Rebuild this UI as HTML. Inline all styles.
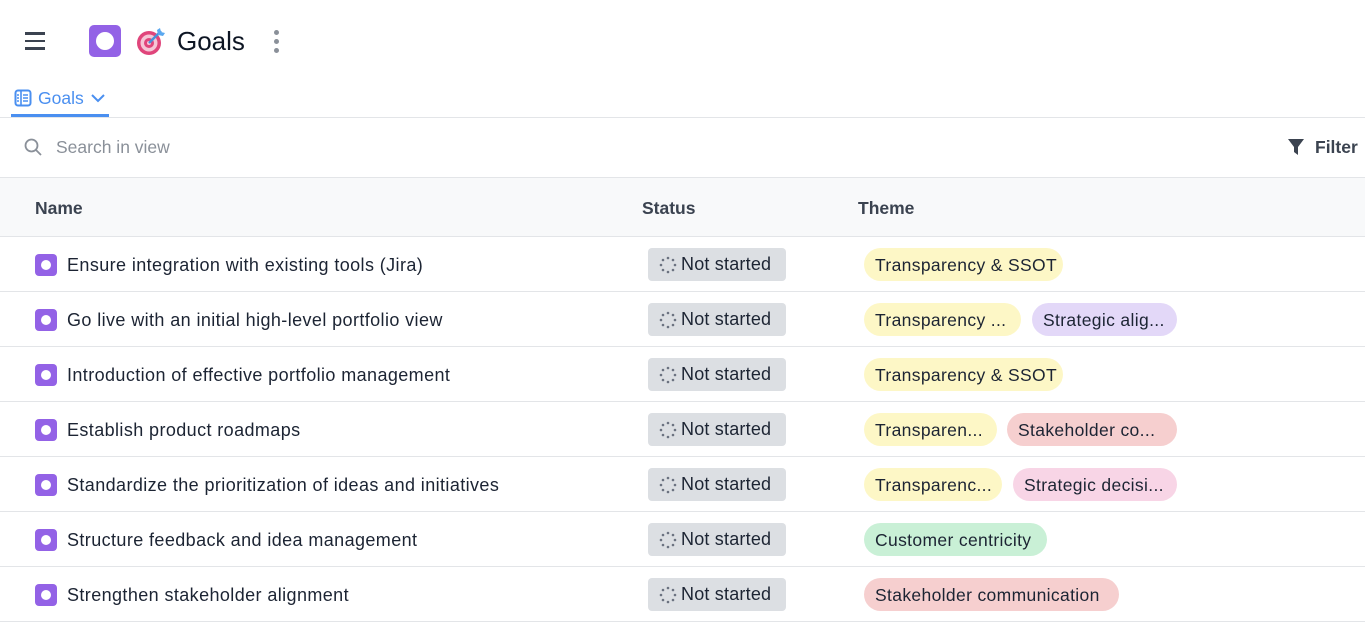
<!DOCTYPE html>
<html><head><style>
*{box-sizing:border-box;margin:0;padding:0}
body{width:1365px;height:617px;overflow:hidden;background:#fff;font-family:"Liberation Sans",sans-serif;color:#1c2433;position:relative}
.abs{position:absolute}
.row{position:absolute;left:0;width:1365px;height:55px;border-bottom:1px solid #e3e5e8}
.ic{position:absolute;left:35px;top:17px;width:22px;height:22px;background:#9362e6;border-radius:4px}
.ic:after{content:"";position:absolute;left:6px;top:6px;width:10px;height:10px;border-radius:50%;background:#fff}
.nm{position:absolute;left:67px;top:18px;font-size:18px;letter-spacing:0.4px;white-space:nowrap}
.st{position:absolute;left:648px;top:11px;width:138px;height:33px;background:#dcdfe3;border-radius:4px;font-size:18px;padding:6px 0 0 33px;letter-spacing:0.2px}
.st svg{position:absolute;left:11px;top:8px}
.tag{position:absolute;top:11px;height:33px;border-radius:17px;font-size:17.5px;padding:7px 0 0 11px;white-space:nowrap;overflow:hidden;letter-spacing:0.35px}
.y{background:#fdf7c6}.p{background:#e3d8f8}.r{background:#f6cfcf}.k{background:#f8d5e6}.g{background:#c9f0d6}
</style></head><body>
<div class="abs" style="left:25px;top:32px;width:20px;height:18px">
<div style="height:2.5px;background:#3b4350;margin-bottom:5px"></div><div style="height:2.5px;background:#3b4350;margin-bottom:5px"></div><div style="height:2.5px;background:#3b4350"></div></div>
<div class="abs" style="left:89px;top:25px;width:32px;height:32px;background:#9362e6;border-radius:5px"><div style="position:absolute;left:7px;top:7px;width:18px;height:18px;border-radius:50%;background:#fff"></div></div>
<svg class="abs" style="left:136px;top:27px" width="30" height="30" viewBox="0 0 30 30"><circle cx="13" cy="16" r="12" fill="#e0457b"/><circle cx="13" cy="16" r="8.5" fill="#f5c6d6"/><circle cx="13" cy="16" r="5" fill="#e0457b"/><circle cx="13" cy="16" r="2" fill="#f5c6d6"/><path d="M13 16 L25 4" stroke="#4a90d9" stroke-width="2.5"/><path d="M21 3 l3 -2 1 4 4 1 -2 3 -5 -1z" fill="#5aa8f0"/></svg>
<div class="abs" style="left:177px;top:26px;font-size:26px;color:#0e1624">Goals</div>
<div class="abs" style="left:274px;top:30px;width:6px">
<div style="width:5px;height:5px;border-radius:50%;background:#8a9099;margin-bottom:4px"></div><div style="width:5px;height:5px;border-radius:50%;background:#8a9099;margin-bottom:4px"></div><div style="width:5px;height:5px;border-radius:50%;background:#8a9099"></div></div>
<svg class="abs" style="left:14px;top:89px" width="18" height="18" viewBox="0 0 18 18"><rect x="1.5" y="1.5" width="15" height="15" rx="2.5" fill="none" stroke="#4a8ff0" stroke-width="2"/><path d="M7 2v14M9 6h5M9 9h5M9 12h5M3 6h2M3 9h2M3 12h2" stroke="#4a8ff0" stroke-width="1.6"/></svg>
<div class="abs" style="left:38px;top:88px;font-size:17.5px;color:#4a8ff0">Goals</div>
<svg class="abs" style="left:91px;top:93px" width="14" height="10" viewBox="0 0 14 10"><path d="M1 2l6 6 6-6" fill="none" stroke="#4a8ff0" stroke-width="2"/></svg>
<div class="abs" style="left:11px;top:114px;width:98px;height:3px;background:#4a8ff0"></div>
<div class="abs" style="left:0;top:117px;width:1365px;height:1px;background:#e3e5e8"></div>
<svg class="abs" style="left:24px;top:138px" width="18" height="18" viewBox="0 0 18 18"><circle cx="7.5" cy="7.5" r="6" fill="none" stroke="#8a9099" stroke-width="1.8"/><path d="M12 12l5 5" stroke="#8a9099" stroke-width="1.8"/></svg>
<div class="abs" style="left:56px;top:137px;font-size:17.5px;color:#8a9099">Search in view</div>
<svg class="abs" style="left:1287px;top:138px" width="18" height="18" viewBox="0 0 18 18"><path d="M1 1h16l-6 8v8l-4-3v-5z" fill="#3b4350"/></svg>
<div class="abs" style="left:1315px;top:137px;font-size:17.5px;font-weight:bold;color:#3b4350">Filter</div>
<div class="abs" style="left:0;top:177px;width:1365px;height:60px;background:#f8f9fa;border-top:1px solid #e3e5e8;border-bottom:1px solid #e3e5e8"></div>
<div class="abs" style="left:35px;top:198px;font-size:17.5px;font-weight:bold;color:#3b4350">Name</div>
<div class="abs" style="left:642px;top:198px;font-size:17.5px;font-weight:bold;color:#3b4350">Status</div>
<div class="abs" style="left:858px;top:198px;font-size:17.5px;font-weight:bold;color:#3b4350">Theme</div>

<svg width="0" height="0" style="position:absolute"><defs><g id="sp"><g fill="#6b7280"><circle cx="9" cy="2" r="1.3"/><circle cx="14" cy="4" r="1.3"/><circle cx="16" cy="9" r="1.3"/><circle cx="14" cy="14" r="1.3"/><circle cx="9" cy="16" r="1.3"/><circle cx="4" cy="14" r="1.3"/><circle cx="2" cy="9" r="1.3"/><circle cx="4" cy="4" r="1.3"/></g></g></defs></svg>

<div class="row" style="top:237px"><div class="ic"></div><div class="nm">Ensure integration with existing tools (Jira)</div><div class="st"><svg width="18" height="18"><use href="#sp"/></svg>Not started</div><div class="tag y" style="left:864px;width:199px">Transparency &amp; SSOT</div></div>
<div class="row" style="top:292px"><div class="ic"></div><div class="nm">Go live with an initial high-level portfolio view</div><div class="st"><svg width="18" height="18"><use href="#sp"/></svg>Not started</div><div class="tag y" style="left:864px;width:157px">Transparency ...</div><div class="tag p" style="left:1032px;width:145px">Strategic alig...</div></div>
<div class="row" style="top:347px"><div class="ic"></div><div class="nm">Introduction of effective portfolio management</div><div class="st"><svg width="18" height="18"><use href="#sp"/></svg>Not started</div><div class="tag y" style="left:864px;width:199px">Transparency &amp; SSOT</div></div>
<div class="row" style="top:402px"><div class="ic"></div><div class="nm">Establish product roadmaps</div><div class="st"><svg width="18" height="18"><use href="#sp"/></svg>Not started</div><div class="tag y" style="left:864px;width:133px">Transparen...</div><div class="tag r" style="left:1007px;width:170px">Stakeholder co...</div></div>
<div class="row" style="top:457px"><div class="ic"></div><div class="nm">Standardize the prioritization of ideas and initiatives</div><div class="st"><svg width="18" height="18"><use href="#sp"/></svg>Not started</div><div class="tag y" style="left:864px;width:138px">Transparenc...</div><div class="tag k" style="left:1013px;width:164px">Strategic decisi...</div></div>
<div class="row" style="top:512px"><div class="ic"></div><div class="nm">Structure feedback and idea management</div><div class="st"><svg width="18" height="18"><use href="#sp"/></svg>Not started</div><div class="tag g" style="left:864px;width:183px">Customer centricity</div></div>
<div class="row" style="top:567px"><div class="ic"></div><div class="nm">Strengthen stakeholder alignment</div><div class="st"><svg width="18" height="18"><use href="#sp"/></svg>Not started</div><div class="tag r" style="left:864px;width:255px">Stakeholder communication</div></div>
</body></html>
